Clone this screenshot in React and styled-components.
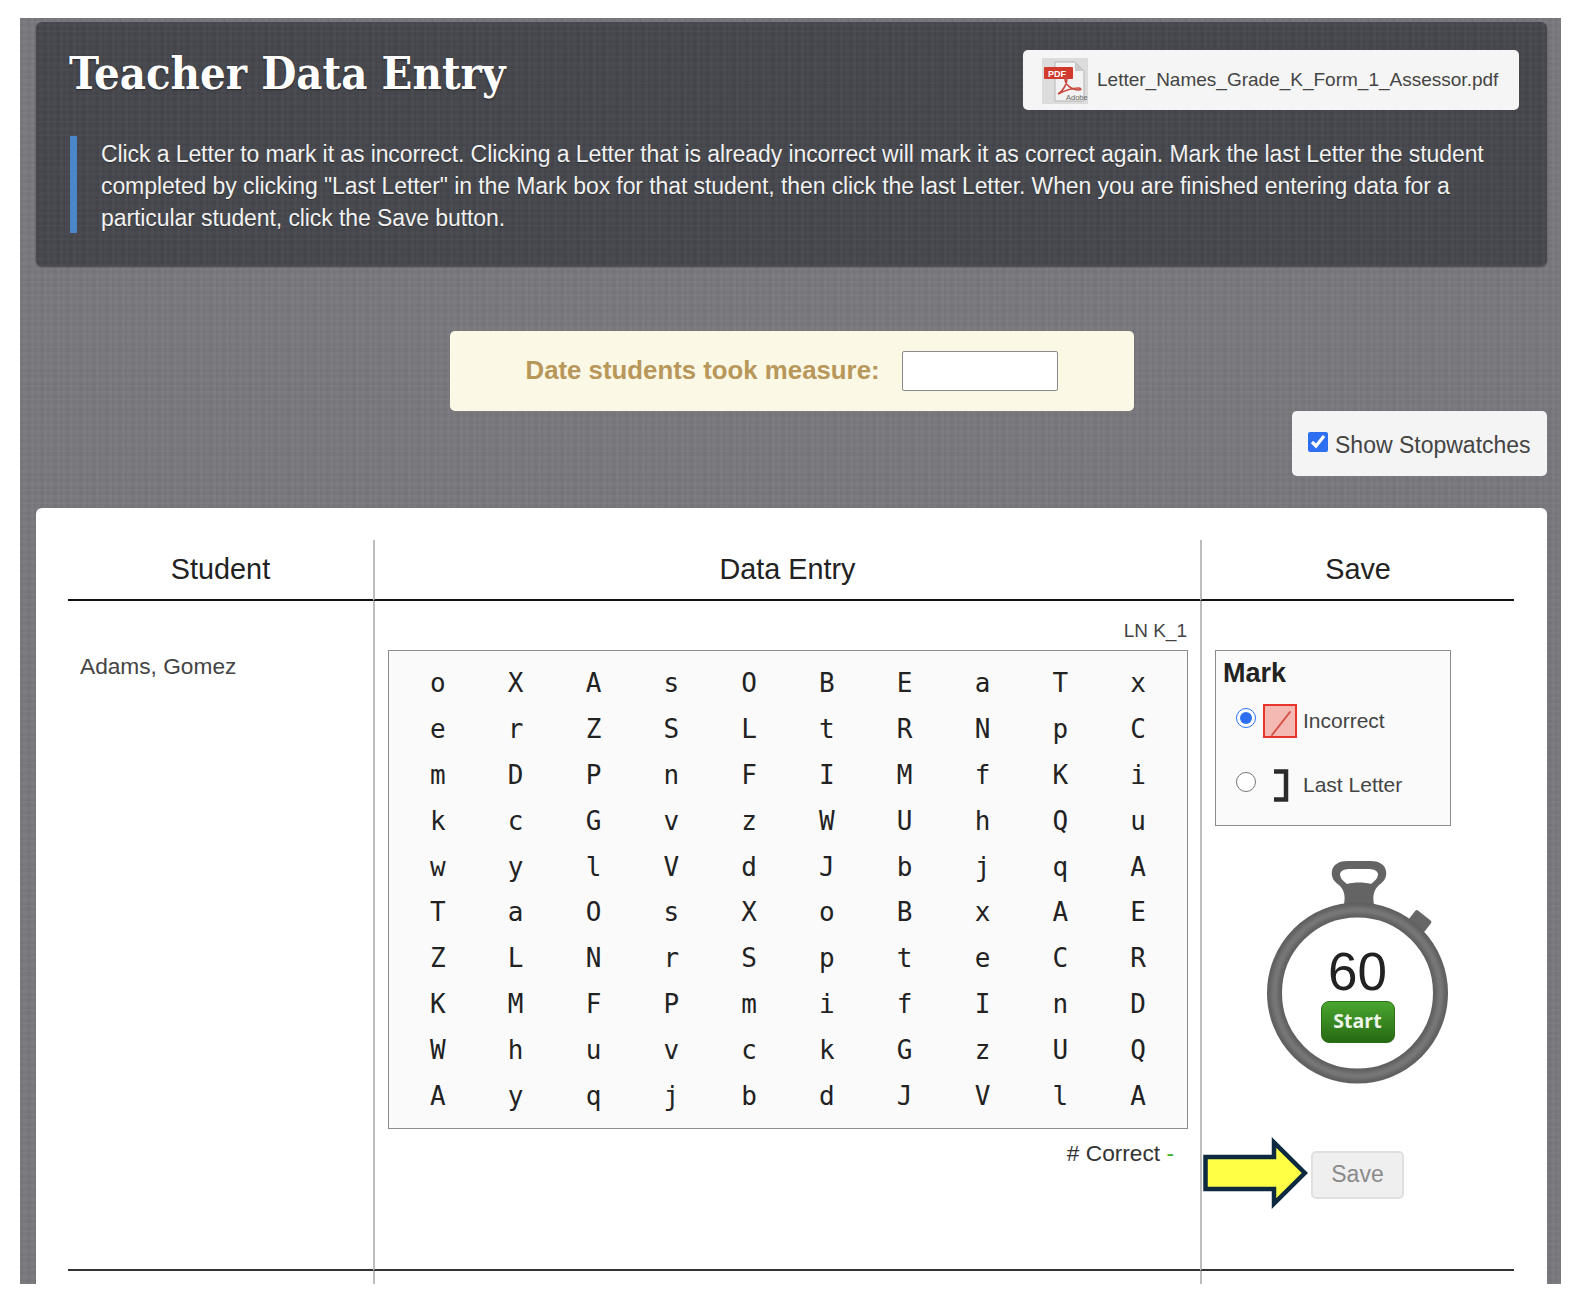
import React from "react";
import styled, { createGlobalStyle } from "styled-components";

const Global = createGlobalStyle`
  html, body { margin: 0; padding: 0; background: #fff; }
  body { font-family: "Liberation Sans", Arial, sans-serif; color: #333; }
`;

const linen = `
  repeating-linear-gradient(90deg, rgba(255,255,255,.018) 0 1px, rgba(0,0,0,.02) 1px 3px, rgba(255,255,255,.01) 3px 7px, rgba(0,0,0,.018) 7px 11px, rgba(255,255,255,.022) 11px 13px),
  repeating-linear-gradient(0deg, rgba(255,255,255,.015) 0 2px, rgba(0,0,0,.018) 2px 5px, rgba(255,255,255,.01) 5px 9px, rgba(0,0,0,.014) 9px 13px)
`;

const Page = styled.div`
  padding: 18px 15px 16px 20px;
`;
const Frame = styled.main`
  height: 1262px;
  padding: 4px 14px 0 16px;
  background-color: #78787d;
  background-image: ${linen};
  overflow: hidden;
`;
const Header = styled.header`
  box-sizing: border-box;
  height: 244px;
  padding: 28px 28px 0 33px;
  border-radius: 6px;
  background-color: #46474d;
  background-image: ${linen};
  box-shadow: 0 1px 2px rgba(0,0,0,.4);
`;
const HeaderTop = styled.div`
  display: flex;
  justify-content: space-between;
  align-items: flex-start;
`;
const Title = styled.h1`
  margin: 0;
  font: bold 45px/48px "DejaVu Serif Condensed", "DejaVu Serif", serif;
  color: #fff;
  letter-spacing: 0;
  text-shadow: 0 1px 2px rgba(0,0,0,.5);
`;
const PdfLink = styled.a`
  box-sizing: border-box;
  width: 496px;
  height: 60px;
  display: flex;
  align-items: center;
  gap: 9px;
  padding: 0 0 0 19px;
  border-radius: 5px;
  background: #f5f5f5;
  color: #444;
  font-size: 19px;
  white-space: nowrap;
`;
const PdfGlyph = styled.svg`
  flex: none;
  display: block;
  margin-top: 2px;
`;
const Instructions = styled.p`
  margin: 26px 0 0 1px;
  padding: 2px 0 0 24px;
  width: 1400px;
  height: 95px;
  box-sizing: content-box;
  border-left: 7px solid #4a86c8;
  font-size: 23px;
  line-height: 32.2px;
  color: #f2f2f2;
  letter-spacing: -0.09px;
  text-shadow: 0 1px 1px rgba(0,0,0,.4);
`;
const DateBox = styled.div`
  box-sizing: border-box;
  width: 684px;
  height: 80px;
  margin: 65px auto 0;
  padding: 0 0 2px 76px;
  display: flex;
  align-items: center;
  gap: 22px;
  border-radius: 5px;
  background: #fbf8e6;
  color: #b8975a;
  font-weight: bold;
  font-size: 25.8px;
`;
const DateInput = styled.input`
  box-sizing: border-box;
  width: 156px;
  height: 40px;
  margin-top: 2px;
  border: 1px solid #8a8a8a;
  border-radius: 2px;
  background: #fff;
`;
const WatchRow = styled.div`
  display: flex;
  justify-content: flex-end;
`;
const WatchToggle = styled.label`
  box-sizing: border-box;
  width: 255px;
  height: 65px;
  padding: 3px 0 0 16px;
  display: flex;
  align-items: center;
  gap: 7px;
  border-radius: 5px;
  background: #f4f4f4;
  color: #444;
  font-size: 23px;
  white-space: nowrap;
`;
const WatchCheck = styled.input`
  width: 20px;
  height: 20px;
  margin: 0 0 6px;
  accent-color: #2e6ff2;
`;
const Panel = styled.section`
  margin-top: 32px;
  padding: 32px 33px 0 32px;
  height: 800px;
  background: #fff;
  border-radius: 6px 6px 0 0;
`;
const Grid = styled.div`
  display: grid;
  grid-template-columns: 305px 827px 314px;
  grid-template-rows: 61px 670px 14px;
`;
const HeadCell = styled.div`
  display: flex;
  align-items: center;
  justify-content: center;
  font-size: 28.8px;
  color: #222;
  border-bottom: 2px solid #111;
  border-left: ${p => (p.$first ? "none" : "2px solid #bdbdbd")};
  box-sizing: border-box;
`;
const BodyCell = styled.div`
  position: relative;
  box-sizing: border-box;
  border-bottom: 2px solid #333;
  border-left: ${p => (p.$first ? "none" : "2px solid #bdbdbd")};
`;
const TailCell = styled.div`
  border-left: ${p => (p.$first ? "none" : "2px solid #bdbdbd")};
`;
const StudentName = styled.div`
  padding: 51px 0 0 12px;
  font-size: 22.7px;
  line-height: 28px;
  color: #444;
`;
const EntryCol = styled.div`
  padding: 18px 13px 0 13px;
`;
const FormLabel = styled.div`
  text-align: right;
  font-size: 19px;
  line-height: 24px;
  color: #444;
`;
const LetterGrid = styled.div`
  box-sizing: border-box;
  margin-top: 7px;
  width: 800px;
  height: 479px;
  padding: 9px 8px 0 10px;
  display: grid;
  grid-template-columns: repeat(10, 77.8px);
  grid-auto-rows: 45.9px;
  background: #fafafa;
  border: 1.5px solid #8c8c8c;
  font: 26px "DejaVu Sans Mono", monospace;
  color: #222;
`;
const Letter = styled.span`
  display: flex;
  align-items: center;
  justify-content: center;
`;
const CorrectLine = styled.div`
  margin-top: 10px;
  padding-right: 13px;
  text-align: right;
  font-size: 22.7px;
  line-height: 28px;
  color: #333;
`;
const Dash = styled.span`
  color: #3fae1e;
`;
const SaveCol = styled.div`
  padding: 49px 0 0 13px;
`;
const MarkBox = styled.div`
  box-sizing: border-box;
  width: 236px;
  height: 176px;
  padding: 6px 7px;
  background: #fafafa;
  border: 1.5px solid #8c8c8c;
`;
const MarkTitle = styled.div`
  font-weight: bold;
  font-size: 27px;
  line-height: 32px;
  color: #222;
`;
const MarkOption = styled.label`
  display: flex;
  align-items: center;
  height: 38px;
  margin-top: ${p => p.$mt}px;
  padding-left: 13px;
  font-size: 21px;
  color: #444;
`;
const Radio = styled.input`
  width: 20px;
  height: 20px;
  margin: 0 0 7px;
  accent-color: #2e6ff2;
`;
const MarkIcon = styled.span`
  display: flex;
  align-items: center;
  justify-content: center;
  width: 34px;
  height: 34px;
  margin: 0 6px 0 7px;
`;
const Watch = styled.div`
  position: relative;
  width: 185px;
  height: 232px;
  margin: 33px 0 0 50px;
`;
const WatchFace = styled.div`
  position: absolute;
  left: 0;
  right: 0;
  top: 85px;
  display: flex;
  flex-direction: column;
  align-items: center;
`;
const Count = styled.div`
  font-size: 53px;
  line-height: 55px;
  color: #222;
`;
const StartBtn = styled.button`
  width: 74px;
  height: 42px;
  padding: 0 0 3px;
  margin-top: 2px;
  border: 1px solid #2c7016;
  border-radius: 8px;
  background: linear-gradient(#4aa52f, #266912);
  color: #eef5ea;
  font: bold 19.5px "Open Sans", sans-serif;
`;
const SaveArea = styled.div`
  position: absolute;
  left: 109px;
  top: 550px;
`;
const SaveBtn = styled.button`
  display: block;
  box-sizing: border-box;
  width: 93px;
  height: 48px;
  padding: 0 0 2px;
  border: 2px solid #e0e0e0;
  border-radius: 5px;
  background: #efefef;
  color: #8a8a8a;
  font: 23px "Liberation Sans", sans-serif;
`;
const Arrow = styled.svg`
  position: absolute;
  left: -108px;
  top: -15px;
`;

const LETTERS = [
  "oXAsOBEaTx", "erZSLtRNpC", "mDPnFIMfKi", "kcGvzWUhQu", "wylVdJbjqA",
  "TaOsXoBxAE", "ZLNrSpteCR", "KMFPmifInD", "WhuvckGzUQ", "AyqjbdJVlA",
];

const PdfIcon = () => (
  <PdfGlyph width="46" height="46" viewBox="0 0 46 46">
    <rect width="46" height="46" fill="#dcdcdc" />
    <path d="M13 4h20l9 9v30H13z" fill="#f2f2f2" stroke="#b5b5b5" />
    <path d="M33 4v9h9z" fill="#c9c9c9" />
    <rect x="2" y="9" width="29" height="12" rx="1" fill="#d0392b" />
    <text x="6" y="18.5" fontSize="9" fontWeight="bold" fill="#fff" fontFamily="Liberation Sans">PDF</text>
    <path d="M16 36c5-3 9-10 9-15 0-3-2-3-2 0 0 5 6 11 14 11 3 0 2-2-1-2-7 0-14 3-20 6z" fill="none" stroke="#c8473c" strokeWidth="1.6" />
    <text x="24" y="42" fontSize="7.5" fill="#666" fontFamily="Liberation Sans">Adobe</text>
  </PdfGlyph>
);

const SlashIcon = () => (
  <svg width="34" height="34" viewBox="0 0 34 34">
    <rect x="1" y="1" width="32" height="32" fill="#f4b9b3" stroke="#e8352b" strokeWidth="2" />
    <path d="M9 31L27 8" stroke="#d65047" strokeWidth="2" strokeLinecap="round" />
  </svg>
);

const BracketIcon = () => (
  <svg width="16" height="33" viewBox="0 0 16 33" style={{ marginLeft: 2 }}>
    <path d="M1 2.5h12v28H1" fill="none" stroke="#2b2b2b" strokeWidth="4.5" />
  </svg>
);

const StopwatchArt = () => (
  <svg width="185" height="232" viewBox="0 0 185 232" style={{ display: "block" }}>
    <defs>
      <filter id="ringSoft" x="-10%" y="-10%" width="120%" height="120%">
        <feGaussianBlur stdDeviation="2" />
      </filter>
    </defs>
    <path
      fillRule="evenodd"
      fill="#646464"
      d="M78 50C81 38 80 32 74 26C68 22 66 17 67 12C68 5 75 2 82 2H106C113 2 120 5 121 12C122 17 120 22 114 26C108 32 107 38 110 50Z
         M84 10H104C110 10 113 13 113 15C113 19 110 22 106 25C99 23 89 23 82 25C78 22 75 19 75 15C75 13 78 10 84 10Z"
    />
    <rect x="145" y="55" width="20" height="15" rx="2" transform="rotate(38 155 62)" fill="#676767" />
    <circle cx="92.5" cy="134" r="83" fill="#fff" stroke="#5f5f5f" strokeWidth="15" />
    <circle cx="92.5" cy="134" r="83" fill="none" stroke="#7c7c7c" strokeWidth="6" filter="url(#ringSoft)" />
  </svg>
);

const ArrowArt = () => (
  <Arrow width="108" height="76" viewBox="0 0 108 76">
    <path d="M2.5 21H71V6.5L101.8 37L71 67.5V53H2.5Z" fill="#ffff45" stroke="#0d2a40" strokeWidth="4.5" />
  </Arrow>
);

export default function App() {
  return (
    <Page>
      <Global />
      <Frame>
        <Header>
          <HeaderTop>
            <Title>Teacher Data Entry</Title>
            <PdfLink>
              <PdfIcon />
              Letter_Names_Grade_K_Form_1_Assessor.pdf
            </PdfLink>
          </HeaderTop>
          <Instructions>
            Click a Letter to mark it as incorrect. Clicking a Letter that is already incorrect will mark it as correct again. Mark the last Letter the student completed by clicking "Last Letter" in the Mark box for that student, then click the last Letter. When you are finished entering data for a particular student, click the Save button.
          </Instructions>
        </Header>
        <DateBox>
          Date students took measure:
          <DateInput type="text" />
        </DateBox>
        <WatchRow>
          <WatchToggle>
            <WatchCheck type="checkbox" defaultChecked />
            Show Stopwatches
          </WatchToggle>
        </WatchRow>
        <Panel>
          <Grid>
            <HeadCell $first>Student</HeadCell>
            <HeadCell>Data Entry</HeadCell>
            <HeadCell>Save</HeadCell>
            <BodyCell $first>
              <StudentName>Adams, Gomez</StudentName>
            </BodyCell>
            <BodyCell>
              <EntryCol>
                <FormLabel>LN K_1</FormLabel>
                <LetterGrid>
                  {LETTERS.flatMap((row, r) =>
                    row.split("").map((c, i) => <Letter key={`${r}-${i}`}>{c}</Letter>)
                  )}
                </LetterGrid>
                <CorrectLine># Correct <Dash>-</Dash></CorrectLine>
              </EntryCol>
            </BodyCell>
            <BodyCell>
              <SaveCol>
                <MarkBox>
                  <MarkTitle>Mark</MarkTitle>
                  <MarkOption $mt={13}>
                    <Radio type="radio" name="mark" defaultChecked />
                    <MarkIcon><SlashIcon /></MarkIcon>
                    Incorrect
                  </MarkOption>
                  <MarkOption $mt={26}>
                    <Radio type="radio" name="mark" />
                    <MarkIcon><BracketIcon /></MarkIcon>
                    Last Letter
                  </MarkOption>
                </MarkBox>
                <Watch>
                  <StopwatchArt />
                  <WatchFace>
                    <Count>60</Count>
                    <StartBtn>Start</StartBtn>
                  </WatchFace>
                </Watch>
              </SaveCol>
              <SaveArea>
                <ArrowArt />
                <SaveBtn>Save</SaveBtn>
              </SaveArea>
            </BodyCell>
            <TailCell $first />
            <TailCell />
            <TailCell />
          </Grid>
        </Panel>
      </Frame>
    </Page>
  );
}
